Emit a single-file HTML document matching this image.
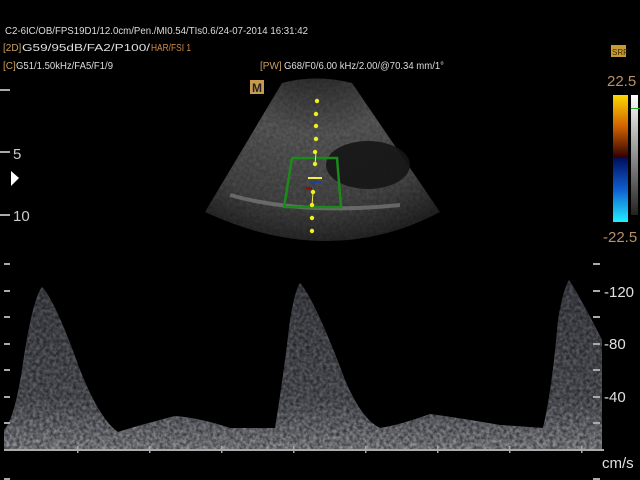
<!DOCTYPE html>
<html><head><meta charset="utf-8"><style>
html,body{margin:0;padding:0;background:#000;width:640px;height:480px;overflow:hidden}
svg{display:block}
text{font-family:"Liberation Sans",sans-serif}
</style></head><body>
<svg width="640" height="480" viewBox="0 0 640 480" xmlns="http://www.w3.org/2000/svg">
<defs>
<radialGradient id="fan" cx="316" cy="20" r="230" gradientUnits="userSpaceOnUse">
<stop offset="0.25" stop-color="#333"/><stop offset="0.5" stop-color="#5e5e5e"/><stop offset="0.8" stop-color="#4a4a4a"/><stop offset="1" stop-color="#222"/>
</radialGradient>
<linearGradient id="wav" x1="0" y1="280" x2="0" y2="450" gradientUnits="userSpaceOnUse">
<stop offset="0" stop-color="#55575f"/><stop offset="0.7" stop-color="#6a6c74"/><stop offset="0.88" stop-color="#8e9098"/><stop offset="1" stop-color="#a8aab0"/>
</linearGradient>
<linearGradient id="cbar" x1="0" y1="95" x2="0" y2="222" gradientUnits="userSpaceOnUse">
<stop offset="0" stop-color="#ffd800"/><stop offset="0.25" stop-color="#d06000"/><stop offset="0.49" stop-color="#300000"/><stop offset="0.5" stop-color="#001060"/><stop offset="0.75" stop-color="#1060d0"/><stop offset="1" stop-color="#20f0ff"/>
</linearGradient>
<linearGradient id="gbar" x1="0" y1="95" x2="0" y2="215" gradientUnits="userSpaceOnUse">
<stop offset="0" stop-color="#fff"/><stop offset="1" stop-color="#222"/>
</linearGradient>
<filter id="noise"><feTurbulence type="fractalNoise" baseFrequency="0.3" numOctaves="2" seed="3"/><feColorMatrix values="0 0 0 0 0  0 0 0 0 0  0 0 0 0 0  0 0 0 -1.2 1.1"/><feComposite in2="SourceGraphic" operator="in"/></filter>
</defs>
<text x="5" y="34" font-size="10" fill="#ddd" textLength="303" lengthAdjust="spacingAndGlyphs">C2-6IC/OB/FPS19D1/12.0cm/Pen./MI0.54/TIs0.6/24-07-2014 16:31:42</text>
<text x="3" y="51" font-size="10" fill="#c8a060">[2D]</text>
<text x="22" y="51" font-size="10" fill="#ddd" textLength="128" lengthAdjust="spacingAndGlyphs">G59/95dB/FA2/P100/</text>
<text x="151" y="51" font-size="10" fill="#d08a40" textLength="40" lengthAdjust="spacingAndGlyphs">HAR/FSI 1</text>
<text x="3" y="69" font-size="10" fill="#c8a060">[C]</text>
<text x="16" y="69" font-size="10" fill="#ddd" textLength="97" lengthAdjust="spacingAndGlyphs">G51/1.50kHz/FA5/F1/9</text>
<text x="260" y="69" font-size="10" fill="#c8a060">[PW]</text>
<text x="284" y="69" font-size="10" fill="#ddd" textLength="160" lengthAdjust="spacingAndGlyphs">G68/F0/6.00 kHz/2.00/@70.34 mm/1°</text>
<rect x="250" y="80" width="14" height="14" fill="#c89a50"/><text x="252" y="92" font-size="12" font-weight="bold" fill="#222">M</text>
<path d="M282 83 Q316 74 352 83 L440 212 Q330 270 205 212 Z" fill="url(#fan)"/>
<path d="M282 83 Q316 74 352 83 L440 212 Q330 270 205 212 Z" fill="#aaa" filter="url(#noise)" opacity="0.3"/>
<ellipse cx="368" cy="165" rx="42" ry="24" fill="#151515" opacity="0.9"/>
<path d="M230 195 Q300 215 400 205" stroke="#888" stroke-width="4" fill="none" opacity="0.6"/>
<path d="M292 158 L337 158 L341 207 L284 207 Z" fill="none" stroke="#1a8a1a" stroke-width="2.5"/>
<rect x="308" y="177" width="14" height="2" fill="#ee4"/><rect x="310" y="181" width="12" height="2" fill="#2040a0"/><rect x="306" y="187" width="6" height="3" fill="#8a1010"/>
<path d="M316 152 L315 166 M313 192 L312 206" stroke="#ee4" stroke-width="1"/>
<g fill="#f0f020"><circle cx="317" cy="101" r="2.2"/><circle cx="316" cy="114" r="2.2"/><circle cx="316" cy="126" r="2.2"/><circle cx="316" cy="139" r="2.2"/><circle cx="315" cy="152" r="2.2"/><circle cx="315" cy="164" r="2.2"/><circle cx="313" cy="192" r="2.2"/><circle cx="312" cy="205" r="2.2"/><circle cx="312" cy="218" r="2.2"/><circle cx="312" cy="231" r="2.2"/></g>
<g fill="#aaa"><rect x="0" y="89" width="10" height="2"/><rect x="0" y="151" width="10" height="2"/><rect x="0" y="214" width="10" height="2"/></g>
<text x="13" y="159" font-size="15" fill="#ccc">5</text>
<text x="13" y="221" font-size="15" fill="#ccc">10</text>
<path d="M11 171 L19 178 L11 186 Z" fill="#fff"/>
<rect x="611" y="45" width="15" height="12" fill="#c89a30"/><text x="612" y="55" font-size="8" fill="#3a2a00">SRF</text>
<text x="607" y="86" font-size="15" fill="#b8906a">22.5</text>
<rect x="613" y="95" width="15" height="127" fill="url(#cbar)"/>
<rect x="631" y="95" width="7" height="120" fill="url(#gbar)"/>
<rect x="631" y="108" width="9" height="1" fill="#2a2"/>
<text x="603" y="242" font-size="15" fill="#b8906a">-22.5</text>
<path d="M4 450 L4 430 Q14 420 22 370 Q32 300 42 287 Q55 300 80 370 Q100 420 118 432 Q140 425 175 416 Q200 418 230 428 L275 428 Q283 380 290 320 Q295 290 300 283 Q315 300 345 380 Q362 420 380 428 Q400 425 430 414 Q460 418 500 425 L543 428 Q552 390 558 320 Q563 290 569 280 Q582 300 602 340 L602 450 Z" fill="url(#wav)"/>
<path d="M4 450 L4 430 Q14 420 22 370 Q32 300 42 287 Q55 300 80 370 Q100 420 118 432 Q140 425 175 416 Q200 418 230 428 L275 428 Q283 380 290 320 Q295 290 300 283 Q315 300 345 380 Q362 420 380 428 Q400 425 430 414 Q460 418 500 425 L543 428 Q552 390 558 320 Q563 290 569 280 Q582 300 602 340 L602 450 Z" fill="#111" filter="url(#noise)" opacity="0.7"/>
<rect x="4" y="449" width="600" height="2" fill="#aaa"/>
<g fill="#aaa"><rect x="77" y="446" width="1.5" height="7"/><rect x="149" y="446" width="1.5" height="7"/><rect x="221" y="446" width="1.5" height="7"/><rect x="293" y="446" width="1.5" height="7"/><rect x="365" y="446" width="1.5" height="7"/><rect x="437" y="446" width="1.5" height="7"/><rect x="509" y="446" width="1.5" height="7"/><rect x="581" y="446" width="1.5" height="7"/></g>
<g fill="#aaa">
<rect x="4" y="263" width="6" height="2"/><rect x="4" y="290" width="6" height="2"/><rect x="4" y="316" width="6" height="2"/><rect x="4" y="343" width="6" height="2"/><rect x="4" y="369" width="6" height="2"/><rect x="4" y="396" width="6" height="2"/><rect x="4" y="422" width="6" height="2"/><rect x="4" y="478" width="6" height="2"/>
<rect x="593" y="263" width="7" height="2"/><rect x="593" y="290" width="7" height="2"/><rect x="593" y="316" width="7" height="2"/><rect x="593" y="343" width="7" height="2"/><rect x="593" y="369" width="7" height="2"/><rect x="593" y="396" width="7" height="2"/><rect x="593" y="422" width="7" height="2"/><rect x="593" y="478" width="7" height="2"/>
</g>
<g font-size="15" fill="#e0e0e0">
<text x="604" y="297">-120</text><text x="604" y="349">-80</text><text x="604" y="402">-40</text><text x="602" y="468">cm/s</text>
</g>
</svg>
</body></html>
